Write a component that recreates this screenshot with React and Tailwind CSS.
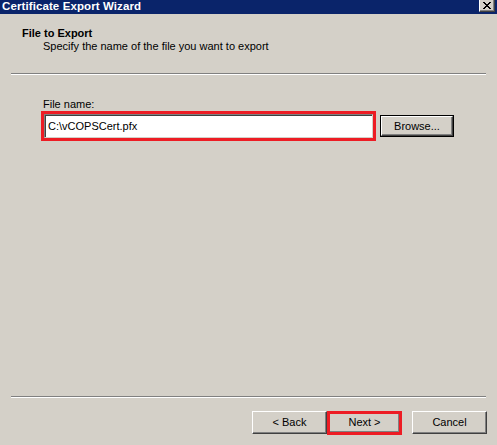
export default function App() {
  const font = { fontFamily: '"Liberation Sans", Arial, sans-serif' };

  return (
    <div
      className="w-[497px] h-[445px] bg-[#d4d0c8] flex flex-col overflow-hidden text-[11px] leading-[13px] text-black"
      style={font}
    >
      {/* title bar */}
      <div className="h-[14px] bg-[#0a246a] flex items-start justify-between pl-[2px] pr-[2px]">
        <span className="text-white font-bold text-[11.5px] leading-[13px] tracking-[0.1px]">
          Certificate Export Wizard
        </span>
        <div className="w-[16px] h-[13px] -mt-[1px] bg-[#d4d0c8] border border-t-white border-l-white border-r-[#404040] border-b-[#404040] shadow-[inset_-1px_-1px_#808080] flex items-center justify-center">
          <svg width="8" height="7" viewBox="0 0 8 7" shapeRendering="crispEdges">
            <path d="M0 0h2v1H0zM6 0h2v1H6zM1 1h2v1H1zM5 1h2v1H5zM2 2h4v1H2zM3 3h2v1H3zM2 4h4v1H2zM1 5h2v1H1zM5 5h2v1H5zM0 6h2v1H0zM6 6h2v1H6z" fill="#000" />
          </svg>
        </div>
      </div>

      {/* header */}
      <div className="pt-[13px]">
        <div className="pl-[22px] font-bold">File to Export</div>
        <div className="pl-[43px]">Specify the name of the file you want to export</div>
      </div>
      <div className="mt-[20px] mx-[11px] h-[2px] border-t border-t-[#808080] border-b border-b-white" />

      {/* content */}
      <div className="flex-1 pl-[41px] pt-[23px]">
        <div className="pl-[2px]">File name:</div>
        <div className="flex items-center gap-[4px]">
          <div className="w-[335px] h-[30px] border-[3px] border-[#ed1c24]">
            <div className="h-full bg-white border border-t-[#808080] border-l-[#808080] border-r-[#d4d0c8] border-b-[#d4d0c8] shadow-[inset_1px_1px_#404040] flex items-center pl-[3px]">
              C:\vCOPSCert.pfx
            </div>
          </div>
          <button className="w-[74px] h-[22px] border border-black bg-[#d4d0c8] p-0">
            <div className="h-full border border-t-white border-l-white border-r-[#404040] border-b-[#404040] shadow-[inset_-1px_-1px_#808080] flex items-center justify-center">
              Browse...
            </div>
          </button>
        </div>
      </div>

      {/* footer */}
      <div className="mx-[11px] h-[2px] border-t border-t-[#808080] border-b border-b-white" />
      <div className="flex justify-end items-start pt-[13px] pb-[10px] pr-[10px]">
        <button className="w-[75px] h-[23px] bg-[#d4d0c8] border border-t-white border-l-white border-r-[#404040] border-b-[#404040] shadow-[inset_-1px_-1px_#808080] flex items-center justify-center p-0">
          &lt; Back
        </button>
        <div className="w-[75px] h-[24px] border-[3px] border-[#ed1c24] bg-[#d4d0c8]">
          <div className="h-full flex items-center justify-center pb-[1px] shadow-[inset_-1px_-1px_#808080]">
            Next &gt;
          </div>
        </div>
        <button className="ml-[10px] w-[75px] h-[23px] bg-[#d4d0c8] border border-t-white border-l-white border-r-[#404040] border-b-[#404040] shadow-[inset_-1px_-1px_#808080] flex items-center justify-center p-0">
          Cancel
        </button>
      </div>
    </div>
  );
}
